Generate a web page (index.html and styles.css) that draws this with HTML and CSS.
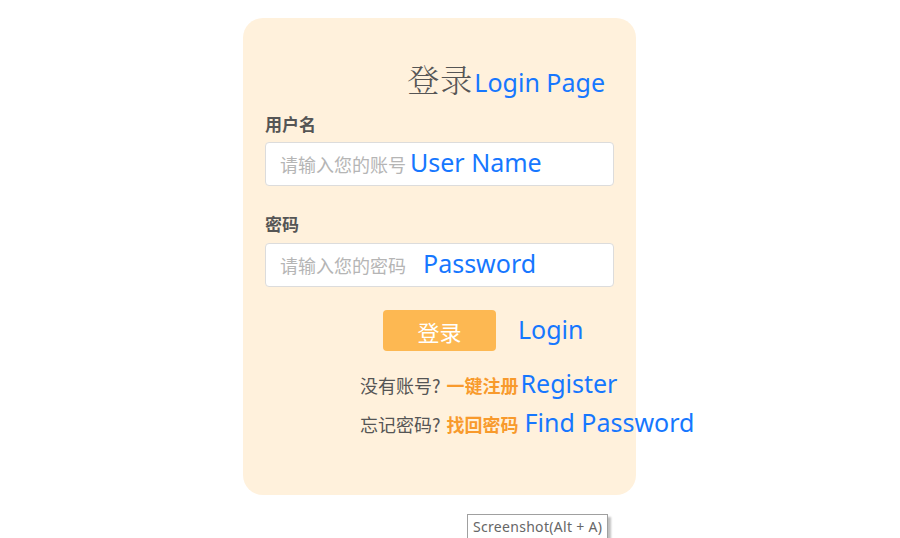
FILE: index.html
```html
<!DOCTYPE html>
<html>
<head>
<meta charset="utf-8">
<link rel="stylesheet" href="styles.css">
</head>
<body>
<div class="page">
  <div class="card">
    <div class="title"><span class="title-cn">登录</span><span class="en en-title">Login Page</span></div>
    <div class="label">用户名</div>
    <div class="input"><span class="ph">请输入您的账号</span><span class="en en-in">User Name</span></div>
    <div class="label label2">密码</div>
    <div class="input input2"><span class="ph">请输入您的密码</span><span class="en en-in en-pw">Password</span></div>
    <div class="btn-row"><div class="btn">登录</div><span class="en en-login">Login</span></div>
    <div class="link-row"><span class="muted">没有账号?</span><span class="strong">一键注册</span><span class="en en-link">Register</span></div>
    <div class="link-row row2"><span class="muted">忘记密码?</span><span class="strong">找回密码</span><span class="en en-link en-find">Find Password</span></div>
  </div>
  <div class="tip-row"><div class="tip">Screenshot(Alt + A)</div></div>
</div>
</body>
</html>
```
FILE: styles.css
```css
html, body { margin: 0; padding: 0; background: #fff; }
body { font-family: "Noto Sans", "Noto Sans CJK SC", sans-serif; width: 900px; height: 538px; overflow: hidden; }
.page { padding: 18px 0 0 243px; }
.card {
  width: 393px; height: 477px; box-sizing: border-box;
  background: #fff1dc; border-radius: 20px;
  padding: 40px 22px 0 22px;
}
.en { color: #1677ff; font-family: "Noto Sans", sans-serif; white-space: nowrap; flex-shrink: 0; padding-bottom: 4px; }
.title { display: flex; justify-content: flex-end; align-items: baseline; padding-right: 9px; height: 40px; }
.title-cn { font-family: "Noto Serif CJK SC", "Noto Sans CJK SC", serif; font-size: 32px; color: #555; font-weight: 300; line-height: 40px; letter-spacing: 1px; }
.en-title { font-size: 25px; margin-left: 1px; line-height: 40px; padding-bottom: 0; }
.label { font-family: "Noto Sans CJK SC", sans-serif; font-weight: 700; font-size: 17px; color: #555; height: 24px; line-height: 24px; margin-top: 14px; }
.label2 { margin-top: 26px; }
.input {
  margin-top: 6px; height: 44px; box-sizing: border-box; width: 349px;
  background: #fff; border: 1px solid #dcdcdc; border-radius: 4px;
  display: flex; align-items: center; padding-left: 14px;
}
.input2 { margin-top: 7px; }
.ph { font-family: "Noto Sans CJK SC", sans-serif; font-size: 18px; color: #b5b5b5; white-space: nowrap; flex-shrink: 0; }
.en-in { font-size: 25px; margin-left: 4px; }
.en-pw { margin-left: 17px; }
.btn-row { display: flex; align-items: center; margin-top: 23px; padding-left: 118px; }
.btn {
  width: 113px; height: 41px; background: #fdb852; border-radius: 4px; flex-shrink: 0;
  color: #fff; font-family: "Noto Sans CJK SC", sans-serif; font-size: 22px;
  display: flex; align-items: center; justify-content: center;
}
.en-login { font-size: 25px; margin-left: 22px; }
.link-row { display: flex; align-items: center; padding-left: 95px; margin-top: 19px; height: 30px; white-space: nowrap; }
.row2 { margin-top: 9px; }
.muted { font-family: "Noto Sans CJK SC", sans-serif; font-size: 18px; color: #555; flex-shrink: 0; }
.strong { font-family: "Noto Sans CJK SC", sans-serif; font-size: 18px; color: #f89a2c; font-weight: 700; margin-left: 6px; flex-shrink: 0; }
.en-link { font-size: 25px; margin-left: 2px; }
.en-find { margin-left: 6px; }
.tip-row { padding: 19px 0 0 224px; display: flex; }
.tip {
  border: 1px solid #a0a0a0; background: #fff;
  font-family: "Noto Sans", sans-serif; font-size: 14px; letter-spacing: 0.3px; color: #666;
  padding: 0 5px; height: 26px; line-height: 24px; box-sizing: border-box;
  box-shadow: 3px 3px 2px rgba(0,0,0,0.25);
}
```
